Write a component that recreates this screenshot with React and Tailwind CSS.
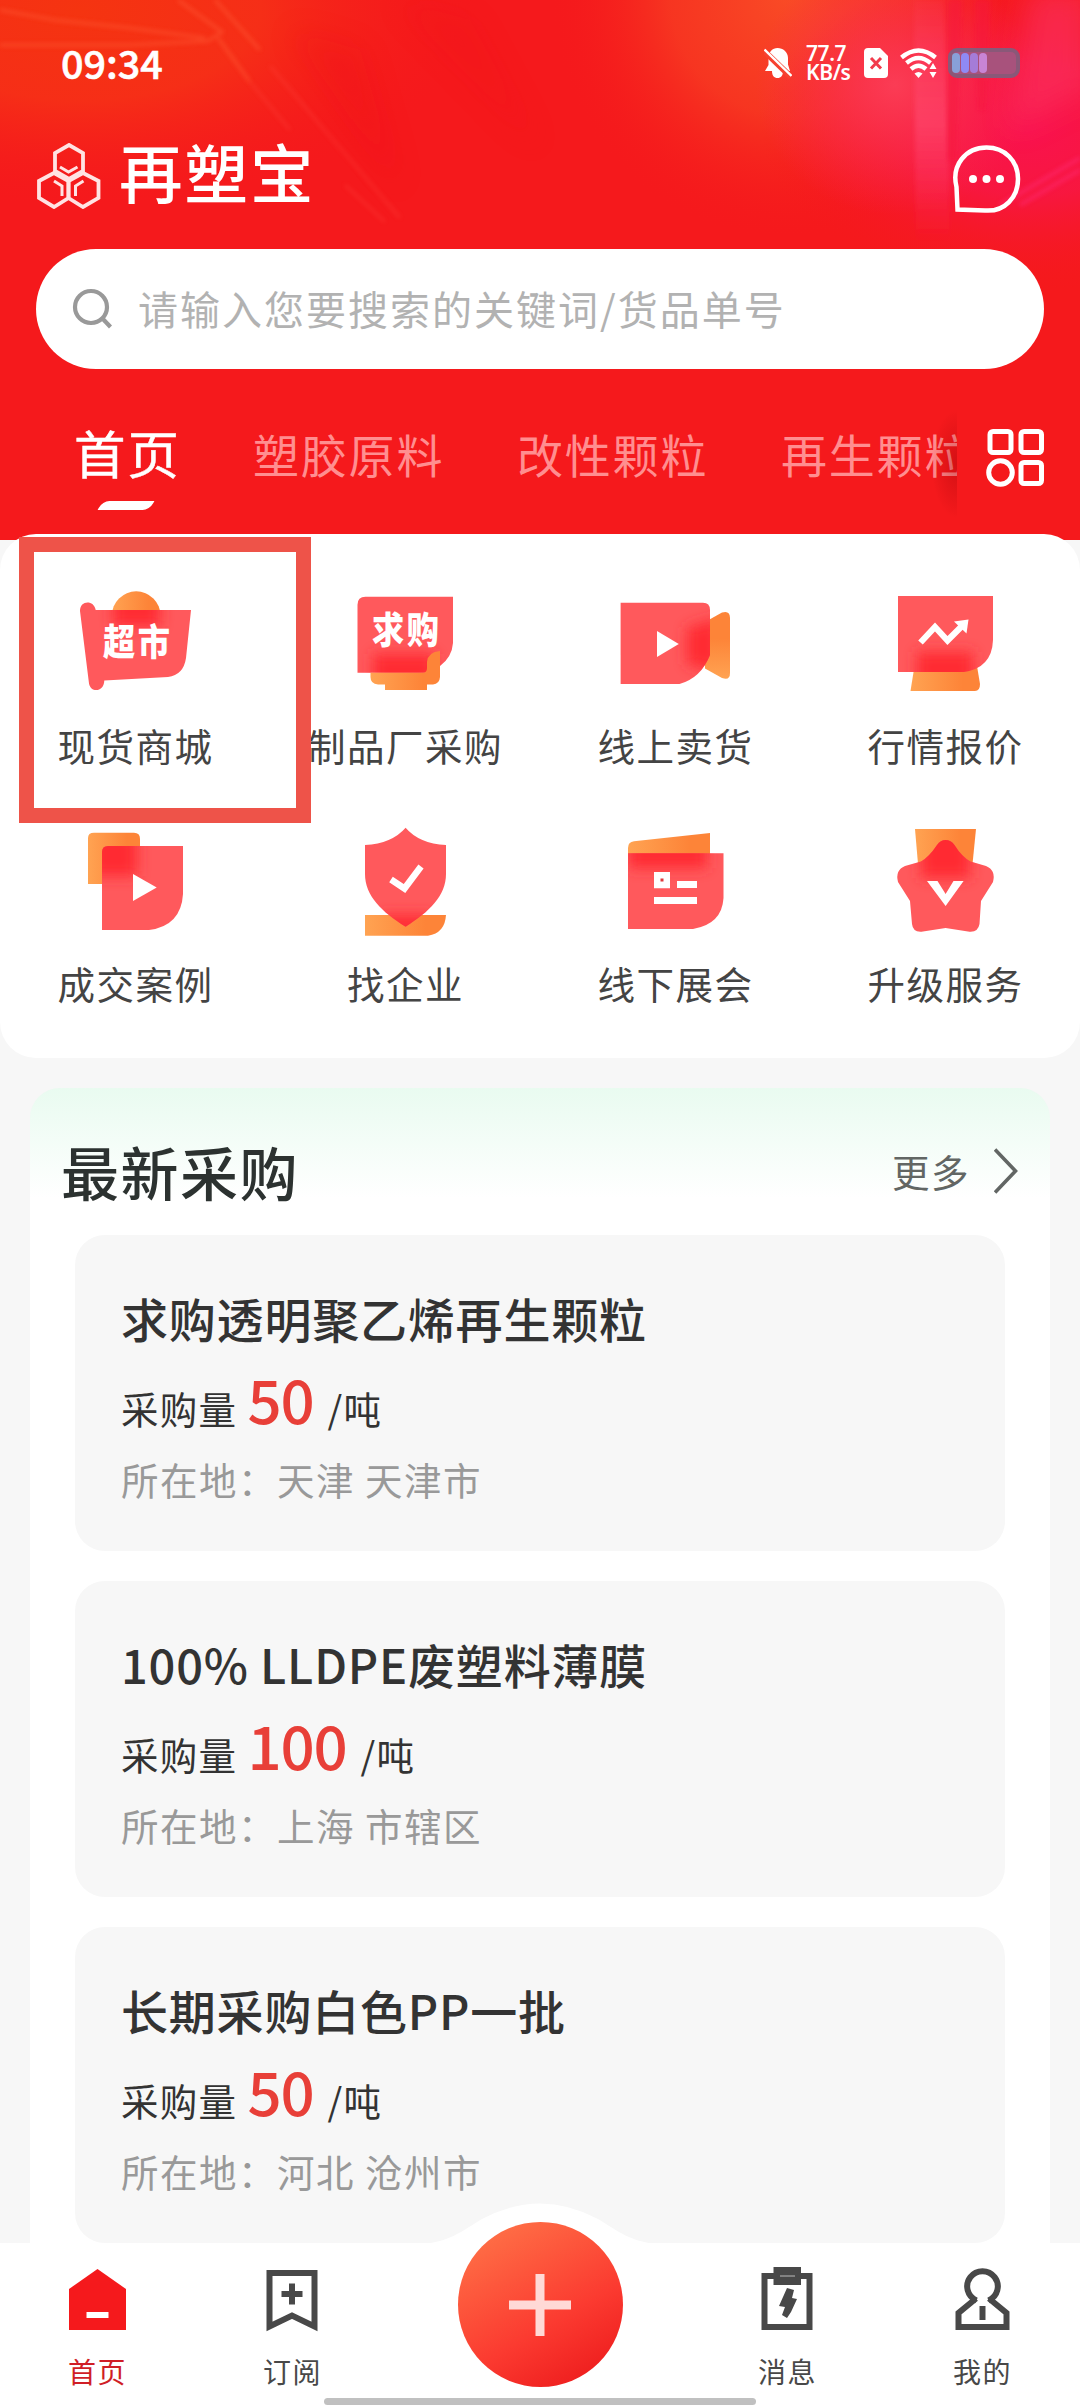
import React from "react";

const RED = "#ff595c";
const HOT = "#ff2c30";

function Defs() {
  return (
    <svg width="0" height="0" className="absolute" aria-hidden="true">
      <defs>
        <linearGradient id="orange" x1="0" y1="0" x2="1" y2="0">
          <stop offset="0" stopColor="#ffa352" />
          <stop offset="0.75" stopColor="#fd8438" />
          <stop offset="1" stopColor="#fd8438" />
        </linearGradient>
        <linearGradient id="orangeDown" x1="0" y1="0" x2="0" y2="1">
          <stop offset="0.4" stopColor="#fd8438" />
          <stop offset="1" stopColor="#ffa352" />
        </linearGradient>
        <filter id="soft" x="-60%" y="-100%" width="220%" height="300%">
          <feGaussianBlur stdDeviation="7" />
        </filter>
      </defs>
    </svg>
  );
}

/* Red badge shape with a deeper glow where the orange part sits behind it. */
function Badge({ id, d, glow }) {
  return (
    <>
      <clipPath id={id}>
        <path d={d} />
      </clipPath>
      <path d={d} fill={RED} />
      <g clipPath={`url(#${id})`}>
        <path d={glow} fill={HOT} filter="url(#soft)" />
      </g>
    </>
  );
}

function IconText({ x, y, children }) {
  return (
    <text
      transform={`translate(${x} ${y}) scale(0.87 1)`}
      fontSize="37"
      fontWeight="900"
      letterSpacing="3"
      fill="#fff"
      fontFamily='"Noto Sans CJK SC", sans-serif'
    >
      {children}
    </text>
  );
}

const MarketIcon = () => (
  <>
    <circle cx="61.2" cy="35.6" r="24.3" fill="url(#orange)" />
    <Badge
      id="c1"
      d="M5 31C5 20 19 20 20.700 30H116L111 78Q108.500 95 93 97L29.300 100.500C29 112.500 15.500 113 14 103.500Z"
      glow="M38 18H85V46H38Z"
    />
    <IconText x={28} y={76}>超市</IconText>
  </>
);

const WantedIcon = () => (
  <>
    <Badge
      id="c2"
      d="M12.500 92.700V24.700Q12.500 16.700 20.500 16.700H108V63Q107 77 95 86L88 92.700Z"
      glow="M28 74H90V104H28Z"
    />
    <path
      d="M25.500 92.700H78Q82 92.700 82 88V82Q83 72 95 71V97Q94.500 104 88 104.500H82V110H40V104.500H33Q25.500 104 25.500 97Z"
      fill="url(#orange)"
    />
    <IconText x={27} y={64}>求购</IconText>
  </>
);

const LiveIcon = () => (
  <>
    <path d="M90 42L107 32.500Q115 30 115 38V93Q115 101 107 98L90 88.500Z" fill="url(#orangeDown)" />
    <Badge
      id="c3"
      d="M5.600 22.700H88Q95 22.700 95 30V75Q86 98 64.500 104H5.600Z"
      glow="M72 48L104 38V92L72 84Z"
    />
    <path d="M42 51L63.800 64L42 77Z" fill="#fff" />
  </>
);

const QuoteIcon = () => (
  <>
    <path d="M29.500 86H92L95 104Q95 111 90 111H25.500Z" fill="url(#orange)" />
    <Badge
      id="c4"
      d="M13 16H108V60Q107 88 78.600 92H13Z"
      glow="M32 72H88V104H32Z"
    />
    <path d="M35.500 62.500L50 47L62.500 60.500L77 46" fill="none" stroke="#fff" strokeWidth="6.200" />
    <path d="M69 41.500L83.500 39.500L81.500 53.500Z" fill="#fff" />
  </>
);

const CaseIcon = () => (
  <>
    <path d="M13 66V20Q13 14.700 19 14.700H59Q65 14.700 65 21V66Z" fill="url(#orange)" />
    <Badge
      id="c5"
      d="M27 112V34Q27 28 33 28H108V76Q106 108 74 112Z"
      glow="M16 16H62V58H16Z"
    />
    <path d="M58 56L81.700 69.500L58 83Z" fill="#fff" />
  </>
);

const CompanyIcon = () => (
  <>
    <path d="M20 97H101Q100 115 83 117.700H20Z" fill="url(#orange)" />
    <Badge
      id="c6"
      d="M60.600 9.700Q74 25.500 101 27V56C101 78 84 94 60.600 108.700C37 94 20 78 20 56V27Q47 25.500 60.600 9.700Z"
      glow="M34 97H88V116H34Z"
    />
    <path d="M46 61.500L59.500 70.500L76 48.500" fill="none" stroke="#fff" strokeWidth="6.500" />
  </>
);

const ExpoIcon = () => (
  <>
    <path d="M13 40V30Q13 24 19 23.300L95 15V40Z" fill="url(#orange)" />
    <Badge
      id="c7"
      d="M13 35.300H108.500V80Q107 106 78 111H13Z"
      glow="M14 22H92V50H14Z"
    />
    <path d="M39 54H55V70.300H39Z M62 63H82V70H62Z M39 79H82V86H39Z" fill="#fff" />
    <rect x="45.500" y="60.500" width="3" height="3" fill="#e0393c" />
  </>
);

const UpgradeIcon = () => (
  <>
    <path d="M30 11H91L87.500 46H33Z" fill="url(#orange)" />
    <Badge
      id="c8"
      d="M60.600 22Q66 22 69.500 27Q77 39 85.500 43.500L101 48Q111 52 108 64L96 83L94.500 106Q93 115 83 113.500L60.600 110L38 113.500Q28 115 27 106L25 83L13 64Q10 52 20 48L36 43.500Q44 39 52 27Q55.500 22 60.600 22Z"
      glow="M36 6H85V60H36Z"
    />
    <path d="M42 63H52.500L60.600 76L68.500 63H78.600L60.600 88Z" fill="#fff" />
  </>
);

const MENU = [
  { label: "现货商城", Icon: MarketIcon },
  { label: "制品厂采购", Icon: WantedIcon },
  { label: "线上卖货", Icon: LiveIcon },
  { label: "行情报价", Icon: QuoteIcon },
  { label: "成交案例", Icon: CaseIcon },
  { label: "找企业", Icon: CompanyIcon },
  { label: "线下展会", Icon: ExpoIcon },
  { label: "升级服务", Icon: UpgradeIcon },
];

const ORDERS = [
  { title: "求购透明聚乙烯再生颗粒", amount: "50", place: "天津 天津市" },
  { title: "100% LLDPE废塑料薄膜", amount: "100", place: "上海 市辖区" },
  { title: "长期采购白色PP一批", amount: "50", place: "河北 沧州市" },
];

function HeaderBackdrop() {
  return (
    <svg className="absolute inset-0" width="1080" height="540" viewBox="0 0 1080 540" aria-hidden="true">
      <defs>
        <radialGradient id="g1" gradientUnits="userSpaceOnUse" cx="0" cy="0" r="1" gradientTransform="translate(80 10) scale(400 200)">
          <stop offset="0" stopColor="#f53410" />
          <stop offset="0.45" stopColor="#f63216" stopOpacity="0.85" />
          <stop offset="1" stopColor="#f5191c" stopOpacity="0" />
        </radialGradient>
        <radialGradient id="g2" gradientUnits="userSpaceOnUse" cx="0" cy="0" r="1" gradientTransform="translate(790 -10) rotate(15) scale(240 250)">
          <stop offset="0" stopColor="#f94c26" />
          <stop offset="0.5" stopColor="#f73c22" stopOpacity="0.8" />
          <stop offset="1" stopColor="#f5191c" stopOpacity="0" />
        </radialGradient>
        <radialGradient id="g3" gradientUnits="userSpaceOnUse" cx="0" cy="0" r="1" gradientTransform="translate(1030 130) scale(270 165)">
          <stop offset="0" stopColor="#f9124e" />
          <stop offset="0.4" stopColor="#f81648" stopOpacity="0.8" />
          <stop offset="1" stopColor="#f5191c" stopOpacity="0" />
        </radialGradient>
        <radialGradient id="g4" gradientUnits="userSpaceOnUse" cx="0" cy="0" r="1" gradientTransform="translate(895 85) scale(140 130)">
          <stop offset="0" stopColor="#fb3c55" />
          <stop offset="1" stopColor="#fa2a50" stopOpacity="0" />
        </radialGradient>
        <linearGradient id="g5" x1="0" y1="0" x2="0" y2="1">
          <stop offset="0" stopColor="#ff4a70" stopOpacity="0.1" />
          <stop offset="0.5" stopColor="#ff4a70" stopOpacity="0.6" />
          <stop offset="1" stopColor="#ff2a60" stopOpacity="0" />
        </linearGradient>
        <filter id="b2"><feGaussianBlur stdDeviation="2" /></filter>
        <filter id="b12" x="-40%" y="-40%" width="180%" height="180%"><feGaussianBlur stdDeviation="14" /></filter>
      </defs>
      <rect width="1080" height="540" fill="#f5191c" />
      <rect width="1080" height="540" fill="url(#g1)" />
      <rect width="1080" height="540" fill="url(#g2)" />
      <rect width="1080" height="540" fill="url(#g3)" />
      <rect width="1080" height="540" fill="url(#g4)" />
      <path d="M1090 -10V90L1010 130L1030 -10Z" fill="#fb3360" opacity="0.6" filter="url(#b12)" />
      <path d="M914 0H944L950 245H916Z" fill="url(#g5)" filter="url(#b2)" />
      <path d="M948 0H962L956 160H948Z M975 0H990L985 110H978Z" fill="#f5123c" opacity="0.45" filter="url(#b2)" />
      <path d="M1080 158L1000 205M1080 170L1020 205" stroke="#ff2c78" strokeWidth="4" opacity="0.5" filter="url(#b2)" />
      <path d="M0 10L55 20L130 28L205 38M0 45H130L208 41L222 32L178 0M215 0L260 50M218 38L250 82" fill="none" stroke="#ff5a36" strokeWidth="3" opacity="0.55" filter="url(#b2)" />
      <path d="M250 82L290 130M270 66L400 218M345 185L385 222" fill="none" stroke="#ff4a40" strokeWidth="3" opacity="0.3" filter="url(#b2)" />
      <path d="M290 30L400 190L360 50Z" fill="#ee0e14" opacity="0.3" filter="url(#b12)" />
      <path d="M395 0L540 150L470 20Z" fill="#ee0e14" opacity="0.2" filter="url(#b12)" />
    </svg>
  );
}

function StatusBar() {
  return (
    <div className="relative flex h-[126px] items-center justify-between pl-[61px] pr-[60px] text-white">
      <span className="pb-[3px] text-[39.500px] font-medium leading-none [-webkit-text-stroke:0.6px_white]">09:34</span>
      <div className="flex items-center">
        <svg width="28" height="32" viewBox="0 0 28 32" fill="#fff" aria-hidden="true">
          <path d="M13.500 1C19 1 24 5 24 11V17.500L26 24H1L4.500 18V11C4.500 5 8.500 1 13.500 1Z" />
          <path d="M8 24H19C19 28.500 17 31 13.500 31S8 28.500 8 24Z" />
          <path d="M-1.500 2.500L27 30" stroke="#f7412f" strokeWidth="6" />
          <path d="M0.500 2.500L27.500 29" stroke="#fff" strokeWidth="2.400" />
        </svg>
        <div className='ml-[14px] w-[46px] whitespace-nowrap font-["Noto_Sans",sans-serif] text-[21px] font-semibold leading-[19px] tracking-[-0.4px]'>
          77.7<br />KB/s
        </div>
        <svg className="ml-[12px]" width="24" height="32" viewBox="0 0 24 32" aria-hidden="true">
          <path d="M4 1H16L24 9V27Q24 31 20 31H4Q0 31 0 27V5Q0 1 4 1Z" fill="#fff" />
          <path d="M7 11L17 21.500M17 11L7 21.500" stroke="#f23b4c" strokeWidth="3" />
        </svg>
        <svg className="ml-[12px]" width="37" height="32" viewBox="0 0 37 32" fill="none" stroke="#fff" strokeWidth="4.400" aria-hidden="true">
          <path d="M1.500 10.500Q18.500 -3.500 35.500 10.500" />
          <path d="M6.500 16Q18.500 6 30.500 16" />
          <path d="M11 22Q18.500 15.500 26 22" />
          <path d="M14.500 26.500Q18.500 23.500 22.500 26.500L18.500 31Z" fill="#fff" stroke="none" />
          <path d="M33 16L36.500 22H29.500Z M33 31L36.500 25H29.500Z" fill="#fff" stroke="none" />
        </svg>
        <div className="ml-[11px] flex h-[30px] w-[72px] items-center gap-[1px] rounded-[9px] border-4 border-[#8a5878] bg-[#a8527c]">
          <div className="h-[20px] w-[8px] rounded-[4px] bg-[#88a0d8]" />
          <div className="h-[20px] w-[8px] rounded-[4px] bg-[#8f8af4]" />
          <div className="h-[20px] w-[8px] rounded-[4px] bg-[#a57cd8]" />
          <div className="h-[20px] w-[8px] rounded-[4px] bg-[#c884d4]" />
        </div>
      </div>
    </div>
  );
}

function Header() {
  return (
    <header className="relative h-[540px] overflow-hidden bg-[#f5191c]">
      <HeaderBackdrop />
      <StatusBar />
      <div className="relative flex h-[100px] items-center pl-[37px] pr-[59px] text-white">
        <svg width="64" height="66" viewBox="0 0 64 66" fill="none" stroke="#ffe3e3" strokeWidth="3.800" aria-hidden="true">
          <path d="M32 2L46 10V28L32 36L18 28V10Z" />
          <path d="M17 30L31.500 38V55L17 64L2 55V38Z" />
          <path d="M46 30L61.500 38V55L46 64L31.500 55V38Z" />
          <path d="M23 24L31.500 29L40.500 24M17 38L25 43V53M46.500 38L38.500 43V53" strokeWidth="3" />
        </svg>
        <h1 className="ml-[18px] pb-[11px] text-[63.500px] font-medium leading-none tracking-[2px]">再塑宝</h1>
        <svg className="ml-auto mt-[6px]" width="68" height="68" viewBox="0 0 68 68" fill="none" aria-hidden="true">
          <path d="M4.500 64.500L3.500 42C-2 20 13 2.500 33.500 2.500C52 2.500 65 16 65 34C65 52 52 67 32 65.500Z" stroke="#fff" strokeWidth="4.500" />
          <g fill="#fff"><circle cx="20" cy="34" r="4" /><circle cx="33.500" cy="34" r="4" /><circle cx="47" cy="34" r="4" /></g>
        </svg>
      </div>
      <div className="relative mx-[36px] mt-[23px] flex h-[120px] items-center rounded-full bg-white pl-[36px]">
        <svg width="42" height="42" viewBox="0 0 42 42" fill="none" stroke="#999" strokeWidth="4.200" aria-hidden="true">
          <circle cx="19" cy="19" r="16" />
          <path d="M30 30L38.500 39" />
        </svg>
        <span className="ml-[24px] pb-[2px] text-[40px] leading-none tracking-[2px] text-[#b2b2b2]">请输入您要搜索的关键词/货品单号</span>
      </div>
      <nav className="relative flex h-[165px] pl-[74px] pr-[36px] text-white">
        <div className="flex w-[883px] overflow-hidden pt-[57px]">
          <div className="w-[179px] shrink-0">
            <div className="text-[51.500px] leading-none tracking-[2px] [-webkit-text-stroke:0.5px_white]">首页</div>
            <div className="ml-[26px] mt-[23px] h-[9px] w-[52px] -skew-x-[28deg] rounded-br-[7px] rounded-tl-[7px] bg-white" />
          </div>
          {["塑胶原料", "改性颗粒", "再生颗粒"].map((t) => (
            <div key={t} className="mt-[4px] w-[264px] shrink-0 text-[46px] leading-none tracking-[1.800px] text-[#ff8e90]">{t}</div>
          ))}
        </div>
        <div className="absolute left-[931px] top-[40px] h-[110px] w-[26px] bg-[radial-gradient(ellipse_at_right,rgba(150,0,5,0.35),transparent_70%)]" />
        <svg className="ml-auto mt-[60px]" width="58" height="58" viewBox="0 0 58 58" fill="none" stroke="#fff" strokeWidth="5" aria-hidden="true">
          <rect x="4" y="2.500" width="21" height="21" rx="3" />
          <rect x="35" y="2.500" width="20.500" height="21" rx="3" />
          <circle cx="14.500" cy="43.500" r="11.800" />
          <rect x="35" y="33.500" width="20.500" height="21" rx="3" />
        </svg>
      </nav>
    </header>
  );
}

function Menu() {
  return (
    <section className="relative -mt-[6px] h-[524px] rounded-[36px] bg-white pt-[46px]">
      <div className="grid grid-cols-4">
        {MENU.map(({ label, Icon }) => (
          <div key={label} className="flex h-[238px] flex-col items-center">
            <svg width="120" height="120" viewBox="0 0 120 120" aria-hidden="true">
              <Icon />
            </svg>
            <div className="mt-[26px] whitespace-nowrap pl-[1px] text-[37.500px] leading-none tracking-[1.500px] text-[#444]">{label}</div>
          </div>
        ))}
      </div>
      <div className="absolute left-[19px] top-[3px] h-[286px] w-[292px] border-[15px] border-[#ee5349]" />
    </section>
  );
}

function OrderCard({ title, amount, place }) {
  return (
    <article className="h-[316px] rounded-[30px] bg-[#f7f7f7] pl-[46px] pt-[59px]">
      <h3 className="text-[47px] font-medium leading-none tracking-[0.800px] text-[#333]">{title}</h3>
      <div className="mt-[27px] flex h-[60px] items-baseline whitespace-pre text-[37.500px] leading-[60px] tracking-[1.300px] text-[#333]">
        采购量<span className="ml-[10px] text-[60px] font-medium tracking-[-1.200px] text-[#e83f38]">{amount}</span><span className="ml-[14px]">/吨</span>
      </div>
      <div className="mt-[32px] text-[37.500px] leading-none tracking-[1.500px] text-[#999]">所在地：{place}</div>
    </article>
  );
}

function Latest() {
  return (
    <section className="mx-[30px] mt-[30px] flex-1 rounded-t-[30px] bg-white bg-[linear-gradient(to_bottom,#e9fbf0,#ffffff_110px)]">
      <div className="flex h-[147px] items-center pl-[31px] pr-[32px] pt-[18px]">
        <h2 className="text-[58px] font-medium leading-none tracking-[1.500px] text-[#2c3230]">最新采购</h2>
        <span className="ml-auto text-[37.500px] leading-none tracking-[1.500px] text-[#626664]">更多</span>
        <svg className="ml-[24px]" width="24" height="46" viewBox="0 0 24 46" fill="none" stroke="#626664" strokeWidth="3.600" aria-hidden="true">
          <path d="M1 1.500L21.500 23L1 44.500" />
        </svg>
      </div>
      <div className="flex flex-col gap-[30px] px-[45px]">
        {ORDERS.map((o) => (
          <OrderCard key={o.title} {...o} />
        ))}
      </div>
    </section>
  );
}

function NavItem({ label, active, children }) {
  return (
    <div className="flex w-[195px] flex-col items-center pt-[18px]">
      <svg width="64" height="72" viewBox="0 0 64 72" fill="none" stroke="#484848" strokeWidth="6" aria-hidden="true">
        {children}
      </svg>
      <div className={active ? "mt-[24px] text-[28px] leading-none tracking-[1.500px] text-[#d01e26]" : "mt-[24px] text-[28px] leading-none tracking-[1.500px] text-[#484848]"}>{label}</div>
    </div>
  );
}

function BottomNav() {
  return (
    <nav className="absolute inset-x-0 bottom-0 h-[165px] bg-white">
      <svg className="absolute left-[420px] top-[-44px]" width="240" height="45" viewBox="0 0 240 45" aria-hidden="true">
        <path d="M0 45C28 44 42 32 62 20Q120 -11 178 20C198 32 212 44 240 45Z" fill="#fff" />
      </svg>
      <div className="relative flex">
        <NavItem label="首页" active>
          <path d="M31.500 8L60 28V69H3V28Z" fill="#f5191c" stroke="none" />
          <path d="M20.500 54H42.500" stroke="#fff" />
        </NavItem>
        <NavItem label="订阅">
          <path d="M8.500 12H53.500V65.500L31 54.500L8.500 65.500Z" />
          <path d="M20.500 33H41.500M31 22.500V43.500" />
        </NavItem>
        <div className="flex w-[300px] justify-center">
          <button className="-mt-[21px] flex h-[165px] w-[165px] items-center justify-center rounded-full bg-[linear-gradient(150deg,#ff7448_5%,#fb3a30_60%,#ea1418_100%)]">
            <svg width="62" height="62" viewBox="0 0 62 62" stroke="#ffd9d6" strokeWidth="9" aria-hidden="true">
              <path d="M0 31H62M31 0V62" />
            </svg>
          </button>
        </div>
        <NavItem label="消息">
          <path d="M8.500 15H53.500V66H8.500Z" />
          <path d="M17.500 6H45V24H17.500Z" fill="#484848" stroke="none" />
          <path d="M24 15H39" stroke="#bbb" strokeWidth="1" />
          <path d="M31 27L38 29L36 37L41 38L35 51L31 57L26 54L29 46L23 45Z" fill="#484848" stroke="none" />
        </NavItem>
        <NavItem label="我的">
          <path d="M25 37.500L7.500 52V66H55.500V52L38 37.500" />
          <path d="M25.500 39.500A15.300 15.300 0 1 1 37.500 39.500" />
          <path d="M31.500 45V59" />
        </NavItem>
      </div>
      <div className="absolute bottom-[3px] left-[324px] h-[7px] w-[432px] rounded-full bg-[#c0c0c0]" />
    </nav>
  );
}

export default function App() {
  return (
    <div className='relative flex h-[2408px] w-[1080px] flex-col overflow-hidden bg-[#f7f7f7] font-["Noto_Sans_CJK_SC",sans-serif]'>
      <Defs />
      <Header />
      <Menu />
      <Latest />
      <BottomNav />
    </div>
  );
}
